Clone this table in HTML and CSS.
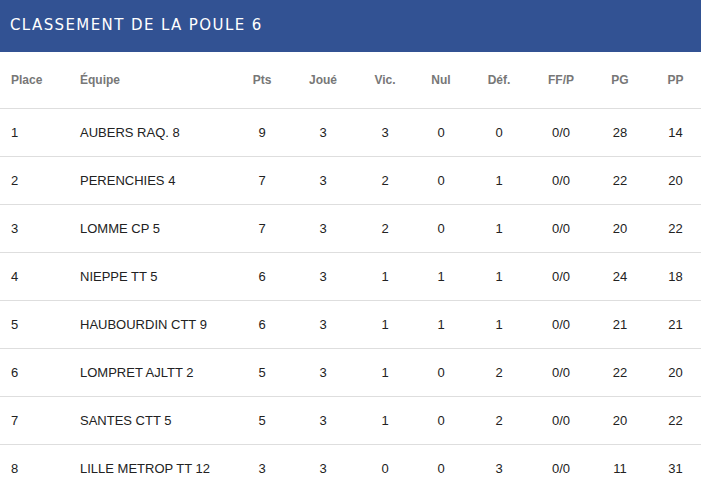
FILE: index.html
```html
<!DOCTYPE html>
<html lang="fr">
<head>
<meta charset="utf-8">
<title>Classement de la poule 6</title>
<link rel="stylesheet" href="styles.css">
</head>
<body>
<div class="panel">
  <h1 class="title">CLASSEMENT DE LA POULE 6</h1>
  <table class="ranking">
    <colgroup>
      <col class="c-place"><col class="c-team"><col class="c-pts"><col class="c-played">
      <col class="c-win"><col class="c-draw"><col class="c-loss"><col class="c-ff">
      <col class="c-pg"><col class="c-pp">
    </colgroup>
    <thead>
      <tr>
        <th class="left">Place</th><th class="left">Équipe</th><th>Pts</th><th>Joué</th>
        <th>Vic.</th><th>Nul</th><th>Déf.</th><th>FF/P</th><th>PG</th><th>PP</th>
      </tr>
    </thead>
    <tbody>
      <tr><td class="left">1</td><td class="left">AUBERS RAQ. 8</td><td>9</td><td>3</td><td>3</td><td>0</td><td>0</td><td>0/0</td><td>28</td><td>14</td></tr>
      <tr><td class="left">2</td><td class="left">PERENCHIES 4</td><td>7</td><td>3</td><td>2</td><td>0</td><td>1</td><td>0/0</td><td>22</td><td>20</td></tr>
      <tr><td class="left">3</td><td class="left">LOMME CP 5</td><td>7</td><td>3</td><td>2</td><td>0</td><td>1</td><td>0/0</td><td>20</td><td>22</td></tr>
      <tr><td class="left">4</td><td class="left">NIEPPE TT 5</td><td>6</td><td>3</td><td>1</td><td>1</td><td>1</td><td>0/0</td><td>24</td><td>18</td></tr>
      <tr><td class="left">5</td><td class="left">HAUBOURDIN CTT 9</td><td>6</td><td>3</td><td>1</td><td>1</td><td>1</td><td>0/0</td><td>21</td><td>21</td></tr>
      <tr><td class="left">6</td><td class="left">LOMPRET AJLTT 2</td><td>5</td><td>3</td><td>1</td><td>0</td><td>2</td><td>0/0</td><td>22</td><td>20</td></tr>
      <tr><td class="left">7</td><td class="left">SANTES CTT 5</td><td>5</td><td>3</td><td>1</td><td>0</td><td>2</td><td>0/0</td><td>20</td><td>22</td></tr>
      <tr><td class="left">8</td><td class="left">LILLE METROP TT 12</td><td>3</td><td>3</td><td>0</td><td>0</td><td>3</td><td>0/0</td><td>11</td><td>31</td></tr>
    </tbody>
  </table>
</div>
</body>
</html>
```
FILE: styles.css
```css
html, body {
  margin: 0;
  padding: 0;
  background: #ffffff;
}
body {
  font-family: "Liberation Sans", Arial, sans-serif;
  color: #222222;
}
.panel {
  width: 701px;
}
.title {
  margin: 0;
  height: 52px;
  box-sizing: border-box;
  padding: 0 10px 3px 10px;
  display: flex;
  align-items: center;
  background: #325293;
  color: #ffffff;
  font-family: "DejaVu Sans", sans-serif;
  font-size: 15px;
  font-weight: normal;
  letter-spacing: 1.4px;
}
.ranking {
  width: 701px;
  border-collapse: collapse;
  table-layout: fixed;
}
.c-place { width: 69px; }
.c-team { width: 163px; }
.c-pts { width: 60px; }
.c-played { width: 62px; }
.c-win { width: 62px; }
.c-draw { width: 50px; }
.c-loss { width: 66px; }
.c-ff { width: 58px; }
.c-pg { width: 60px; }
.c-pp { width: 51px; }
.ranking th {
  height: 56px;
  padding: 0;
  font-size: 12px;
  font-weight: bold;
  color: #777777;
  text-align: center;
  border-bottom: 1px solid #dedede;
  box-sizing: border-box;
}
.ranking td {
  height: 48px;
  padding: 0;
  font-size: 13px;
  color: #222222;
  text-align: center;
  border-bottom: 1px solid #dedede;
  box-sizing: border-box;
}
.ranking .left {
  text-align: left;
  padding-left: 11px;
}
```
